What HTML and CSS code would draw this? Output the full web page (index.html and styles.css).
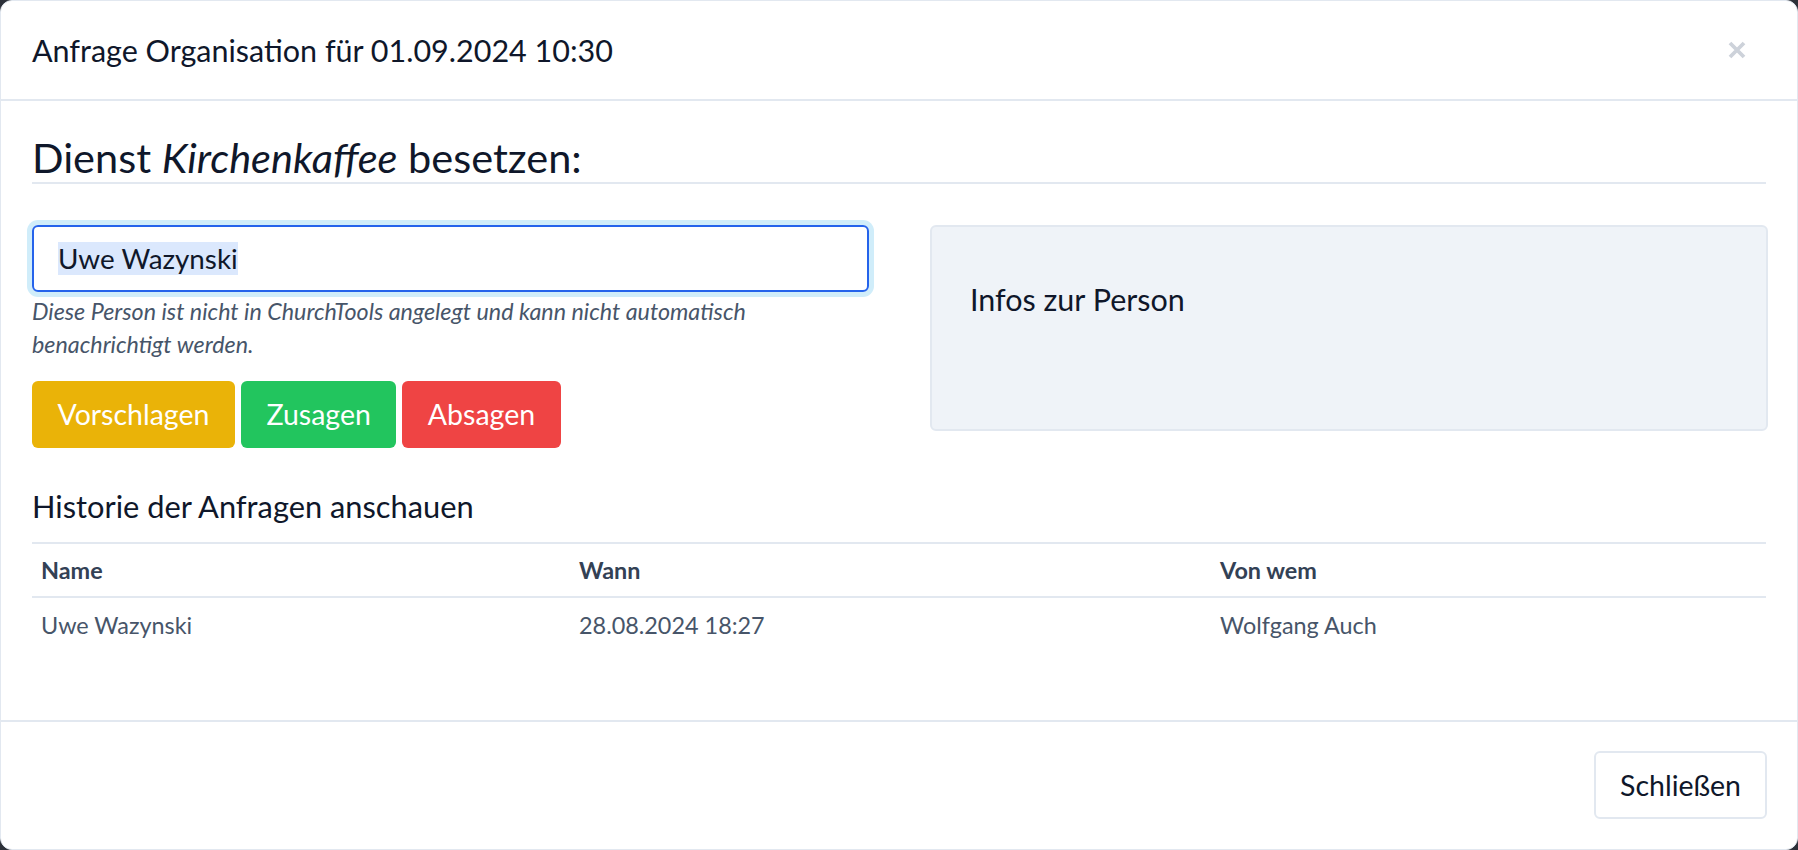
FILE: index.html
```html
<!DOCTYPE html>
<html lang="de">
<head>
<meta charset="utf-8">
<title>Anfrage Organisation</title>
<link rel="stylesheet" href="styles.css">
</head>
<body>
<div class="modal">
  <div class="modal-header">
    <div class="modal-title">Anfrage Organisation für 01.09.2024 10:30</div>
    <button class="close" aria-label="Schließen">
      <svg width="20" height="20" viewBox="0 0 20 20"><path d="M3 3 L17 17 M17 3 L3 17" stroke="#cdd2da" stroke-width="3.8" stroke-linecap="butt"/></svg>
    </button>
  </div>
  <div class="modal-body">
    <h2 class="service-title">Dienst <em>Kirchenkaffee</em> besetzen:</h2>
    <div class="split">
      <div class="left-col">
        <div class="fake-input" role="textbox"><span class="sel">Uwe Wazynski</span></div>
        <p class="help">Diese Person ist nicht in ChurchTools angelegt und kann nicht automatisch benachrichtigt werden.</p>
        <div class="btn-row">
          <button class="btn btn-yellow">Vorschlagen</button>
          <button class="btn btn-green">Zusagen</button>
          <button class="btn btn-red">Absagen</button>
        </div>
      </div>
      <div class="info-box">Infos zur Person</div>
    </div>
    <h3 class="history-title">Historie der Anfragen anschauen</h3>
    <table class="history">
      <thead>
        <tr><th class="c1">Name</th><th class="c2">Wann</th><th class="c3">Von wem</th></tr>
      </thead>
      <tbody>
        <tr><td>Uwe Wazynski</td><td>28.08.2024 18:27</td><td>Wolfgang Auch</td></tr>
      </tbody>
    </table>
  </div>
  <div class="modal-footer">
    <button class="btn btn-light">Schließen</button>
  </div>
</div>
</body>
</html>
```
FILE: styles.css
```css
* { box-sizing: border-box; }
html, body { margin: 0; padding: 0; }
body {
  background: #2d3139;
  font-family: Lato, "Open Sans", sans-serif;
  color: #0f172a;
  width: 1798px;
  height: 850px;
  overflow: hidden;
}
.modal {
  width: 1798px;
  height: 850px;
  background: #fff;
  border: 1px solid #e2e8f0;
  border-radius: 12px;
  display: flex;
  flex-direction: column;
}
.modal-header {
  height: 100px;
  flex: none;
  display: flex;
  align-items: center;
  justify-content: space-between;
  padding: 0 50px 0 31px;
  border-bottom: 2px solid #e2e8f0;
}
.modal-title {
  font-size: 30.5px;
  line-height: 1;
  color: #0f172a;
}
.close {
  background: none;
  border: 0;
  padding: 0;
  width: 20px;
  height: 20px;
  display: block;
}
.close svg { display: block; }
.modal-body {
  flex: 1;
  padding: 34px 31px 0 31px;
}
.service-title {
  margin: 0;
  font-weight: 400;
  font-size: 41.5px;
  line-height: 44px;
  padding-bottom: 3px;
  border-bottom: 2px solid #e2e8f0;
  color: #0f172a;
}
.service-title em { font-style: italic; }
.split {
  display: grid;
  grid-template-columns: 837px 838px;
  gap: 61px;
  margin-top: 41px;
  align-items: start;
}
.fake-input {
  height: 67px;
  border: 2px solid #2563eb;
  border-radius: 6px;
  box-shadow: 0 0 0 5px #d0edfa;
  display: flex;
  align-items: center;
  padding-left: 24px;
  font-size: 27.8px;
  color: #0f172a;
}
.sel {
  background: #dbe8fd;
  line-height: 33px;
  display: inline-block;
}
.help {
  margin: 3px 0 0 0;
  font-style: italic;
  font-size: 23.3px;
  line-height: 33px;
  color: #475569;
}
.btn-row {
  display: flex;
  gap: 6px;
  margin-top: 20px;
}
.btn {
  font-family: Lato, "Open Sans", sans-serif;
  font-size: 28.5px;
  height: 67px;
  border-radius: 6px;
  border: 0;
  padding: 0 25.5px;
  color: #fff;
  line-height: 1;
}
.btn-yellow { background: #eab308; }
.btn-green { background: #22c55e; }
.btn-red { background: #ef4444; }
.info-box {
  height: 206px;
  background: #eff3f8;
  border: 2px solid #e2e8f0;
  border-radius: 6px;
  padding: 55px 38px 0 38px;
  font-size: 30.5px;
  line-height: 35px;
  color: #0f172a;
}
.history-title {
  margin: 42px 0 0 0;
  font-weight: 400;
  font-size: 30.8px;
  line-height: 34px;
  color: #0f172a;
}
.history {
  width: 100%;
  border-collapse: collapse;
  margin-top: 18px;
  font-size: 23.4px;
  color: #334155;
}
.history th, .history td {
  text-align: left;
  padding: 0 9px;
}
.history th {
  font-weight: 700;
  height: 54px;
  border-top: 2px solid #e2e8f0;
  border-bottom: 2px solid #e2e8f0;
  color: #334155;
}
.history td {
  height: 56px;
  padding-bottom: 2px;
  color: #475569;
}
.history .c1 { width: 538px; }
.history .c2 { width: 641px; }
.modal-footer {
  flex: none;
  height: 129px;
  border-top: 2px solid #e2e8f0;
  display: flex;
  justify-content: flex-end;
  padding: 29px 30px 0 0;
}
.btn-light {
  background: #fff;
  color: #0f172a;
  border: 2px solid #e2e8f0;
  height: 68px;
  padding: 0 24px;
  font-size: 28.5px;
}
```
